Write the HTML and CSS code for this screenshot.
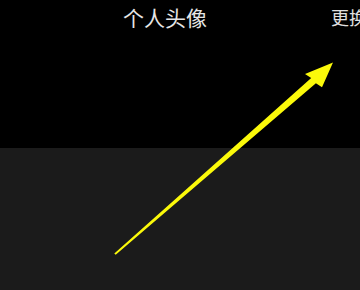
FILE: index.html
```html
<!DOCTYPE html>
<html lang="zh-CN">
<head>
    <meta charset="UTF-8">
    <meta name="viewport" content="width=device-width, initial-scale=1.0">
    <title>个人头像</title>

    <link rel="stylesheet" href="styles.css">
</head>
<body>
    <div class="screen">
        <div class="top">
            <div class="navbar">
                <span class="title">个人头像</span>
                <span class="action">更换</span>
            </div>
        </div>
        <div class="panel"></div>

        <!-- pointer drawn over the screenshot -->
        <svg class="pointer" width="360" height="290" viewBox="0 0 360 290">
            <path d="M114.3 253.4 L311.2 77.9 L305 74 L333 62.5 L322 87.2 L315.9 83.2 L115.7 254.8 Z" fill="#fbf90a"/>
        </svg>
    </div>
</body>
</html>
```

FILE: styles.css
```css
body
{
    margin: 0;
    padding: 0;
    background: #000;
    overflow: hidden;
}

.screen
{
    width: 360px;
    height: 290px;
    display: flex;
    flex-direction: column;
    position: relative;
    overflow: hidden;
}

.top
{
    height: 148px;
    background: #000;
}

.navbar
{
    height: 34px;
    display: flex;
    align-items: center;
    padding-left: 123px;
    white-space: nowrap;
    font-family: "Noto Sans CJK SC", sans-serif;
}

.title
{
    font-size: 21px;
    color: #e6e6e6;
}

.action
{
    margin-left: 124px;
    font-size: 18px;
    color: #e0e0e0;
}

.panel
{
    flex: 1;
    background: #1b1b1b;
}

.pointer
{
    position: absolute;
    top: 0;
    left: 0;
}
```
